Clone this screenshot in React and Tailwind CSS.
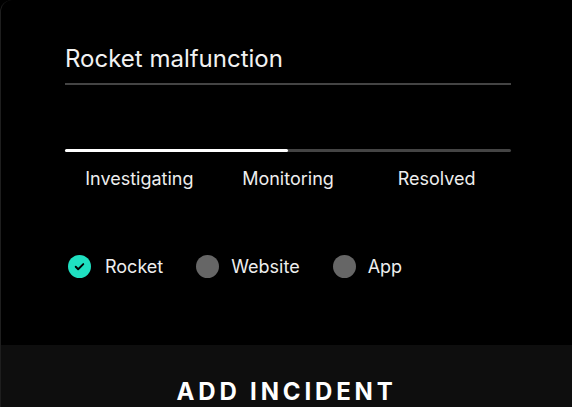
import React from "react";

function Check({ on, label }) {
  return (
    <div className={on ? "flex items-center gap-[14px]" : "flex items-center gap-[12px]"}>
      {on ? (
        <span className="flex h-[23px] w-[23px] items-center justify-center rounded-full bg-[#1fe0c1]">
          <svg width="13" height="13" viewBox="0 0 24 24" fill="none" stroke="#000" strokeWidth="3.5" strokeLinecap="round" strokeLinejoin="round">
            <path d="M5 12.5l4.5 4.5L19 7.5" />
          </svg>
        </span>
      ) : (
        <span className="h-[23px] w-[23px] rounded-full bg-[#666666]" />
      )}
      <span className="text-[18px] leading-[22px] text-[#eeeeee]">{label}</span>
    </div>
  );
}

export default function App() {
  return (
    <div className="h-[407px] w-[572px] overflow-hidden bg-black" style={{ fontFamily: "Inter, 'Noto Sans', sans-serif" }}>
      <div className="flex h-full flex-col rounded-tl-[12px] border-l border-[#1e1e1e] bg-black">
        <div className="flex flex-1 flex-col pl-[64px] pr-[61px]">
          <div className="mt-[45px] border-b-2 border-[#444444] pb-[10px] text-[24px] leading-[28px] text-[#f2f2f2]">
            Rocket malfunction
          </div>
          <div className="mt-[64px] flex h-[3px] w-full rounded-full bg-[#444444]">
            <div className="h-full w-1/2 rounded-full bg-white" />
          </div>
          <div className="mt-[16px] grid grid-cols-3 text-center text-[18px] leading-[22px] text-[#eeeeee]">
            <span>Investigating</span>
            <span>Monitoring</span>
            <span>Resolved</span>
          </div>
          <div className="mt-[65px] flex items-center gap-[33px] pl-[3px]">
            <Check on label="Rocket" />
            <Check label="Website" />
            <Check label="App" />
          </div>
        </div>
        <div className="flex h-[62px] justify-center bg-[#0e0e0e] pt-[33px]">
          <span className="text-[24px] font-bold leading-[28px] tracking-[0.16em] text-white">ADD INCIDENT</span>
        </div>
      </div>
    </div>
  );
}
